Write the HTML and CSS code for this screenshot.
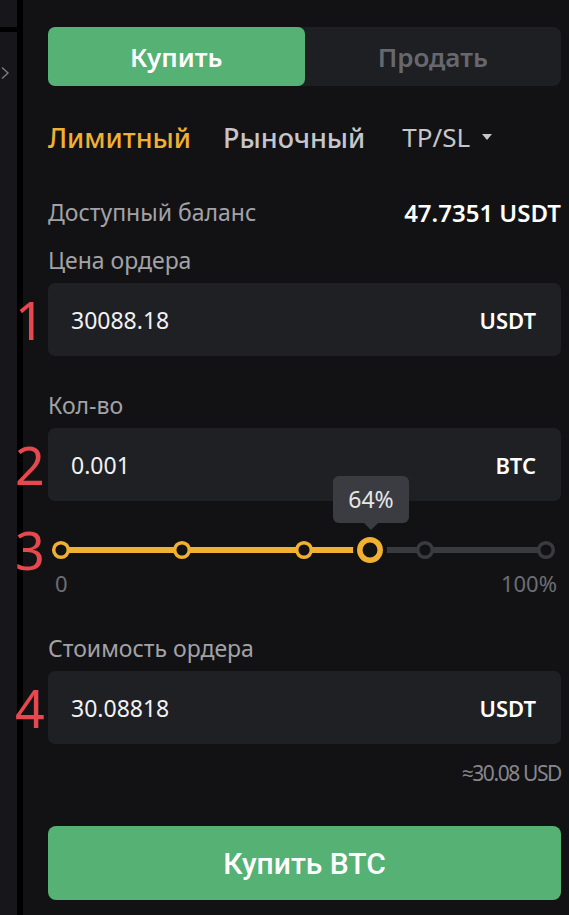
FILE: index.html
```html
<!DOCTYPE html>
<html lang="ru">
<head>
<meta charset="UTF-8" />
<meta name="viewport" content="width=device-width, initial-scale=1" />
<title>Купить BTC</title>
<link rel="stylesheet" href="styles.css">
</head>
<body>
<aside class="sidebar">
  <div class="sidebar-line"></div>
  <svg class="sidebar-chevron" width="10" height="14" viewBox="0 0 10 14" aria-hidden="true">
    <path d="M2 1.5 L8 7 L2 12.5" fill="none" stroke="#7b7b80" stroke-width="1.4" />
  </svg>
</aside>
<main class="panel">
  <div class="side-tabs">
    <button class="side-tab active">Купить</button>
    <button class="side-tab">Продать</button>
  </div>

  <nav class="order-types">
    <span class="order-type active">Лимитный</span>
    <span class="order-type">Рыночный</span>
    <span class="order-type tpsl">TP/SL <span class="caret"></span></span>
  </nav>

  <div class="balance-row">
    <span class="balance-label">Доступный баланс</span>
    <span class="balance-value">47.7351 USDT</span>
  </div>

  <label class="field-label">Цена ордера</label>
  <div class="field">
    <span class="mark">1</span>
    <span class="field-value">30088.18</span>
    <span class="field-unit">USDT</span>
  </div>

  <label class="field-label qty-label">Кол-во</label>
  <div class="field">
    <span class="mark">2</span>
    <span class="field-value">0.001</span>
    <span class="field-unit">BTC</span>
  </div>

  <div class="slider">
    <span class="mark">3</span>
    <div class="tooltip">64%</div>
    <svg width="513" height="30" viewBox="0 0 513 30" aria-hidden="true">
      <line x1="13" y1="15" x2="498" y2="15" stroke="#3a3b3f" stroke-width="6" />
      <line x1="13" y1="15" x2="322" y2="15" stroke="#f0b132" stroke-width="6" />
      <circle cx="13" cy="15" r="7.3" fill="#121215" stroke="#f0b132" stroke-width="3.5" />
      <circle cx="134" cy="15" r="7.3" fill="#121215" stroke="#f0b132" stroke-width="3.5" />
      <circle cx="256" cy="15" r="7.3" fill="#121215" stroke="#f0b132" stroke-width="3.5" />
      <circle cx="377" cy="15" r="7.3" fill="#121215" stroke="#3a3b3f" stroke-width="3.5" />
      <circle cx="498" cy="15" r="7.3" fill="#121215" stroke="#3a3b3f" stroke-width="3.5" />
      <circle cx="322" cy="15" r="17" fill="#121215" />
      <circle cx="322" cy="15" r="10.2" fill="#121215" stroke="#f0b132" stroke-width="5.5" />
    </svg>
  </div>
  <div class="slider-scale">
    <span>0</span>
    <span>100%</span>
  </div>

  <label class="field-label cost-label">Стоимость ордера</label>
  <div class="field">
    <span class="mark">4</span>
    <span class="field-value">30.08818</span>
    <span class="field-unit">USDT</span>
  </div>
  <div class="approx">≈30.08 USD</div>

  <button class="buy-btn">Купить BTC</button>
</main>
</body>
</html>
```

FILE: styles.css
```css
* {
  box-sizing: border-box;
}
body {
  margin: 0;
  background: #121215;
  font-family: 'Noto Sans', 'Open Sans', sans-serif;
  color: #fff;
  display: flex;
  min-height: 100vh;
  overflow: hidden;
}
.sidebar {
  width: 23px;
  flex-shrink: 0;
  background: #17171b;
  border-right: 6px solid #000;
  display: flex;
  flex-direction: column;
}
.sidebar-line {
  margin-top: 27px;
  height: 5px;
  background: #000;
}
.sidebar-chevron {
  margin-top: 34px;
  margin-left: 0;
}
.panel {
  flex: 1;
  padding: 27px 8px 0 25px;
}

/* buy / sell switch */
.side-tabs {
  display: flex;
  height: 59px;
  background: #1e1f23;
  border-radius: 8px;
}
.side-tab {
  flex: 1;
  border: none;
  background: transparent;
  border-radius: 7px;
  font-family: inherit;
  font-size: 26px;
  font-weight: 600;
  color: #67686d;
}
.side-tab.active {
  background: #55b174;
  color: #fff;
}

/* order types */
.order-types {
  display: flex;
  align-items: center;
  height: 40px;
  margin-top: 31px;
  font-size: 27px;
  font-weight: 500;
}
.order-type {
  color: #c6c6ca;
  margin-right: 32px;
  white-space: nowrap;
}
.order-type.active {
  color: #f0b132;
}
.order-type.tpsl {
  margin-left: 5px;
  font-size: 26px;
  font-weight: 400;
  display: flex;
  align-items: center;
}
.caret {
  display: inline-block;
  margin-left: 12px;
  border-left: 5px solid transparent;
  border-right: 5px solid transparent;
  border-top: 6px solid #c6c6ca;
}

/* balance */
.balance-row {
  display: flex;
  justify-content: space-between;
  align-items: center;
  height: 30px;
  margin-top: 40px;
}
.balance-label {
  font-size: 23px;
  color: #a2a2a7;
}
.balance-value {
  font-size: 24px;
  font-weight: 600;
}

/* inputs */
.field-label {
  display: block;
  height: 30px;
  line-height: 30px;
  margin-top: 18px;
  font-size: 23px;
  color: #a2a2a7;
}
.qty-label {
  margin-top: 34px;
}
.cost-label {
  margin-top: 38px;
}
.field {
  position: relative;
  display: flex;
  justify-content: space-between;
  align-items: center;
  height: 73px;
  margin-top: 8px;
  padding: 0 25px 0 23px;
  background: #1f2024;
  border-radius: 7px;
}
.field-value {
  font-size: 23px;
  color: #f2f2f2;
}
.field-unit {
  font-size: 22px;
  font-weight: 600;
}
.mark {
  position: absolute;
  left: -33px;
  top: 50%;
  transform: translateY(-50%);
  font-size: 52px;
  font-weight: 400;
  line-height: 1;
  color: #e5484d;
}

/* slider */
.slider {
  position: relative;
  height: 30px;
  margin-top: 34px;
}
.slider svg {
  display: block;
}
.tooltip {
  position: absolute;
  left: 285px;
  top: -59px;
  width: 76px;
  height: 47px;
  line-height: 47px;
  text-align: center;
  background: #3b3c41;
  border-radius: 6px;
  font-size: 23px;
  color: #e6e6e6;
}
.tooltip::after {
  content: '';
  position: absolute;
  left: 50%;
  bottom: -7px;
  margin-left: -7px;
  border-left: 7px solid transparent;
  border-right: 7px solid transparent;
  border-top: 7px solid #3b3c41;
}
.slider-scale {
  display: flex;
  justify-content: space-between;
  height: 24px;
  line-height: 24px;
  margin-top: 6px;
  padding: 0 4px 0 7px;
  font-size: 22px;
  color: #6d6e73;
}

.approx {
  height: 30px;
  line-height: 30px;
  margin-top: 14px;
  text-align: right;
  font-size: 21px;
  letter-spacing: -1.4px;
  color: #86878c;
}

.buy-btn {
  display: block;
  width: 100%;
  height: 74px;
  margin-top: 38px;
  border: none;
  border-radius: 8px;
  background: #55b174;
  font-family: Roboto, 'Noto Sans', sans-serif;
  font-size: 30px;
  font-weight: 500;
  color: #fff;
}
```
